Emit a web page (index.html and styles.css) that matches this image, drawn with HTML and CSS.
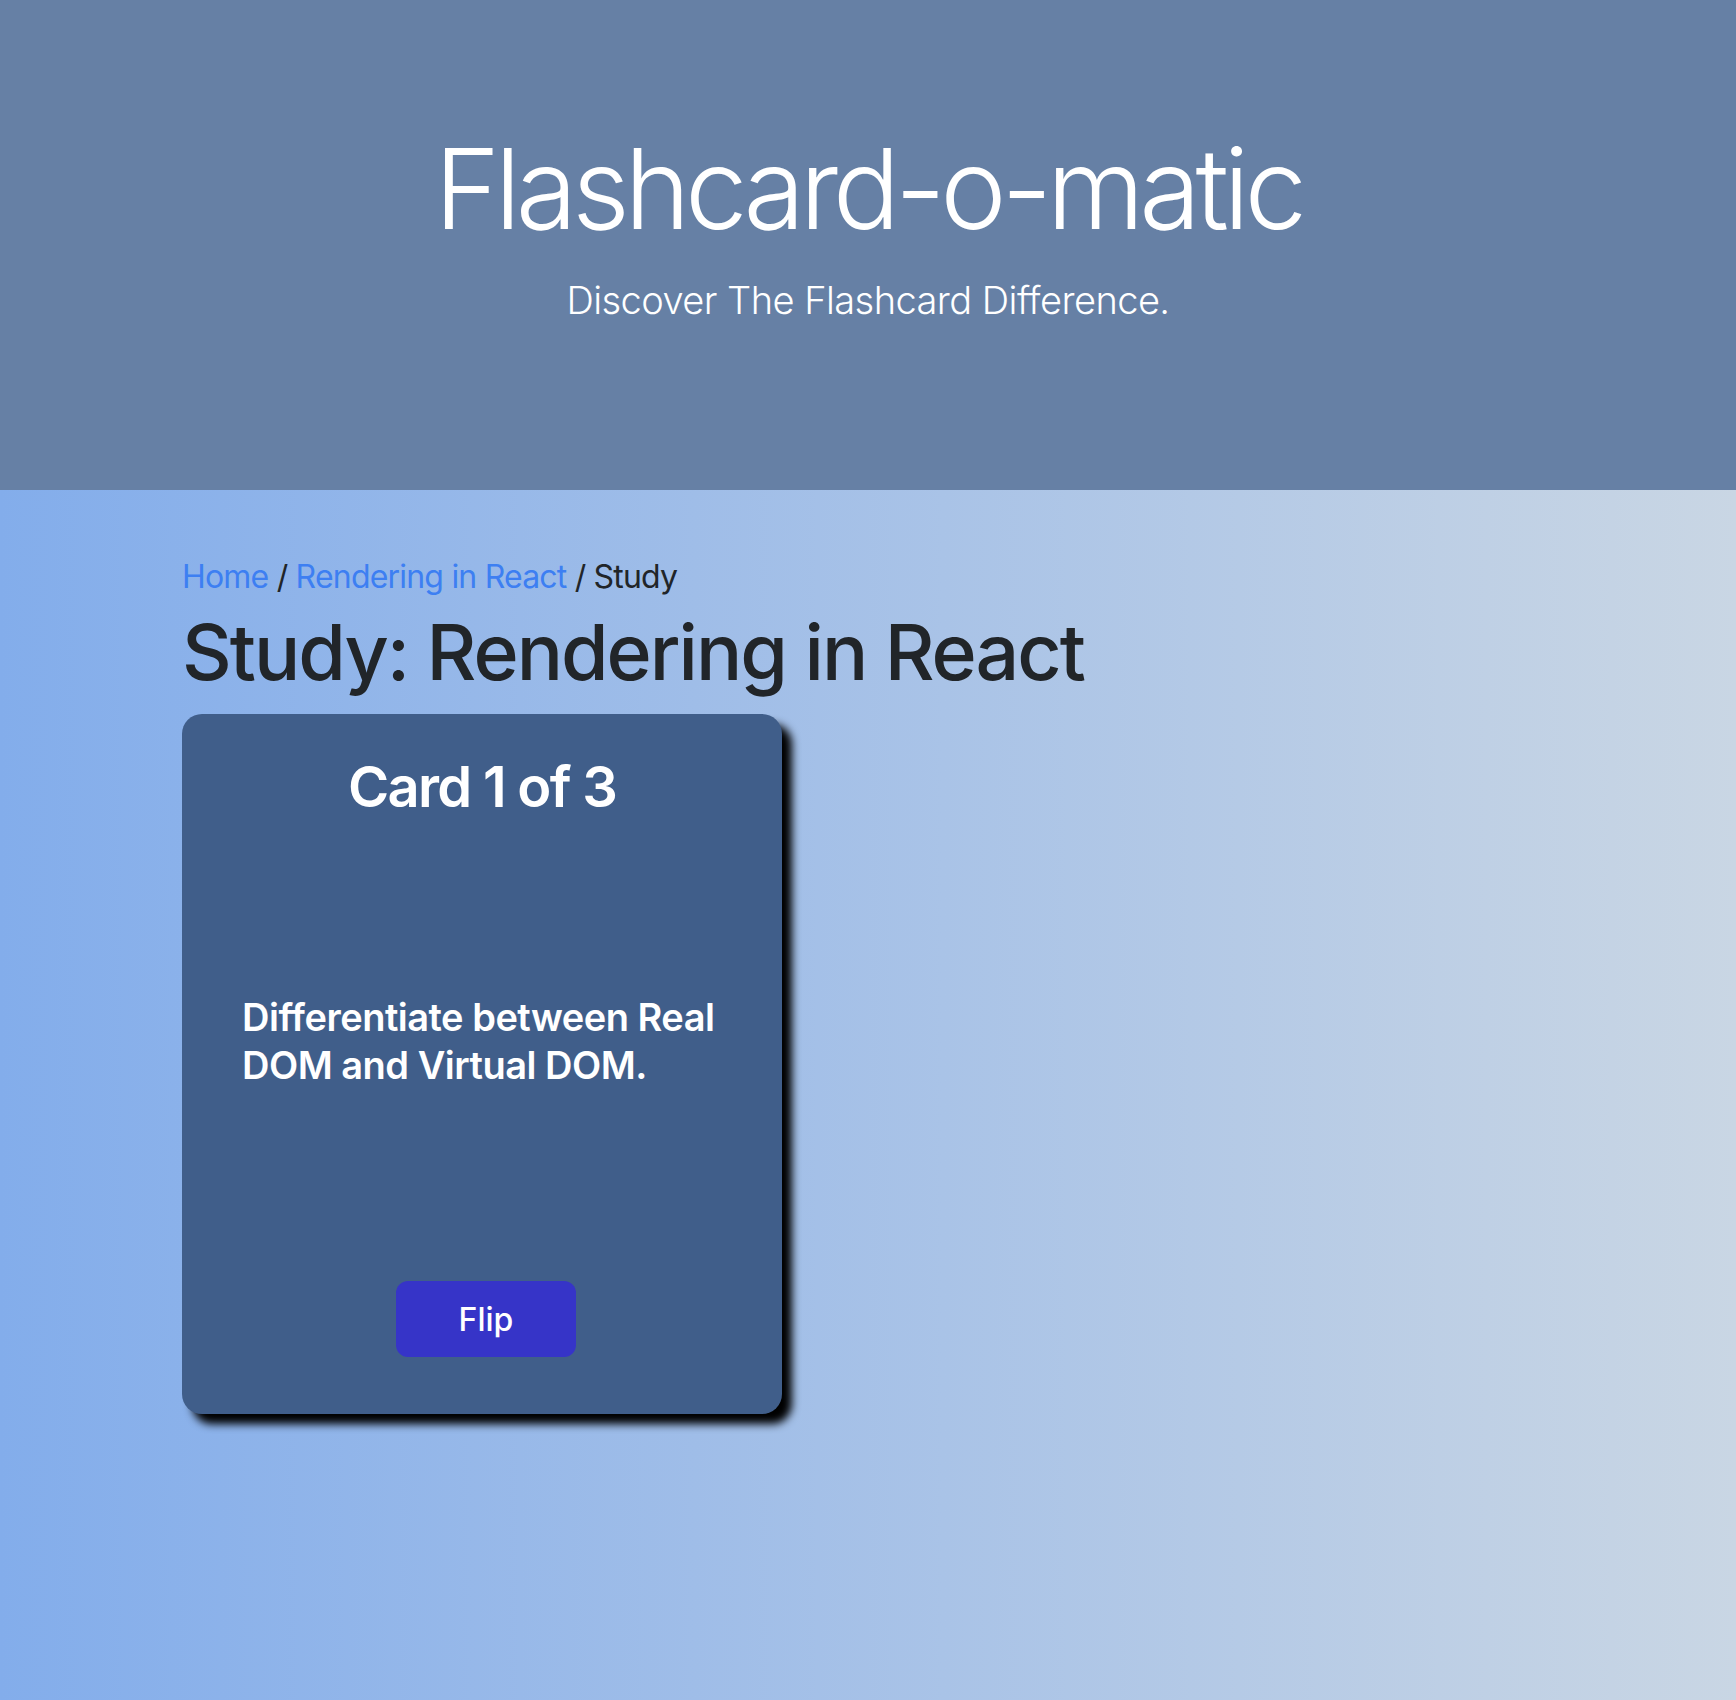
FILE: index.html
```html
<!DOCTYPE html>
<html lang="en">
<head>
<meta charset="utf-8">
<title>Flashcard-o-matic</title>
<link rel="stylesheet" href="styles.css">
</head>
<body>
<header class="hero">
  <h1 class="hero-title">Flashcard-o-matic</h1>
  <p class="hero-lead">Discover The Flashcard Difference.</p>
</header>
<main class="container">
  <nav class="crumbs">
    <a href="#" class="crumb-link">Home</a> / <a href="#" class="crumb-link">Rendering in React</a> / <span>Study</span>
  </nav>
  <h1 class="page-title">Study: Rendering in React</h1>
  <section class="card">
    <h3 class="card-title">Card 1 of 3</h3>
    <p class="card-text">Differentiate between Real DOM and Virtual DOM.</p>
    <button class="btn-flip" type="button">Flip</button>
  </section>
</main>
</body>
</html>
```
FILE: styles.css
```css
* { box-sizing: border-box; }
html, body { margin: 0; padding: 0; }
body {
  font-family: "Inter", "Noto Sans", "Liberation Sans", sans-serif;
  color: #212529;
  min-height: 1700px;
  background: linear-gradient(to right, #83adeb 0%, #9fbde8 40%, #c9d6e4 100%);
}
.hero {
  background: #6680a5;
  height: 490px;
  padding-top: 121px;
  text-align: center;
  color: #fff;
}
.hero-title {
  margin: 0 0 17px;
  font-size: 112px;
  font-weight: 300;
  line-height: 1.2;
  letter-spacing: -5.3px;
}
.hero-lead {
  margin: 0;
  font-size: 38px;
  font-weight: 300;
  line-height: 1.5;
  letter-spacing: -0.55px;
}
.container {
  width: 1440px;
  margin: 0 auto;
  padding: 63px 34px 0;
}
.crumbs {
  font-size: 32px;
  line-height: 48px;
  color: #212529;
  letter-spacing: -0.8px;
}
.crumb-link {
  color: #3d7ff2;
  text-decoration: none;
}
.page-title {
  margin: 5px 0 16px;
  font-size: 77px;
  font-weight: 500;
  line-height: 1.2;
  letter-spacing: -2px;
}
.card {
  width: 600px;
  height: 700px;
  background: #405e8a;
  border-radius: 20px;
  box-shadow: 10px 10px 8px #000;
  padding: 40px 40px 57px 60px;
  display: flex;
  flex-direction: column;
  color: #fff;
}
.card-title {
  margin: 0 0 0 -20px;
  text-align: center;
  font-size: 56px;
  font-weight: 600;
  line-height: 1.2;
  letter-spacing: -1.7px;
}
.card-text {
  margin: 171px 0 0;
  font-size: 38px;
  font-weight: 600;
  line-height: 48px;
  letter-spacing: -0.5px;
}
.btn-flip {
  margin: auto 0 0 154px;
  width: 180px;
  height: 76px;
  border: none;
  border-radius: 12px;
  background: #3634c8;
  color: #fff;
  font-family: inherit;
  font-size: 32px;
  font-weight: 500;
  cursor: pointer;
}
```
